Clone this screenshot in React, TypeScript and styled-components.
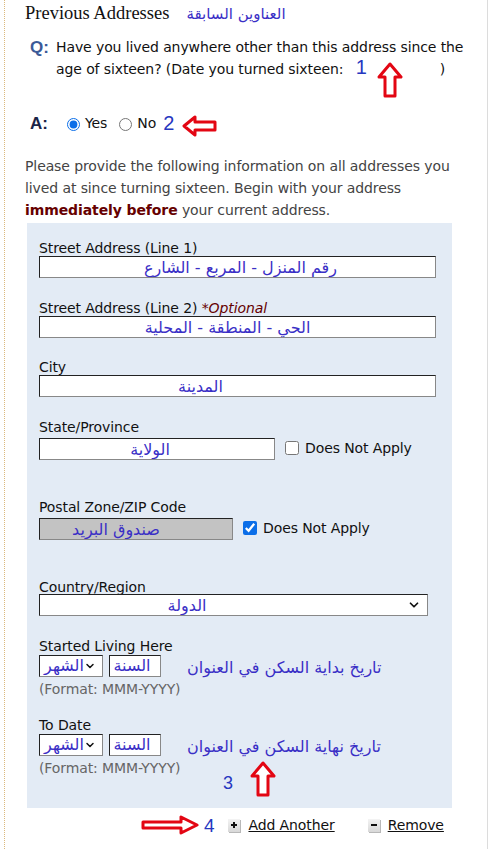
import styled, { createGlobalStyle } from 'styled-components';
import { ChevronDown } from 'lucide-react';

const GlobalStyle = createGlobalStyle`
  html, body {
    margin: 0;
    padding: 0;
    background: #fff;
  }
  body {
    font-family: "DejaVu Sans", Verdana, sans-serif;
    font-size: 14px;
    letter-spacing: -0.1px;
    color: #111;
  }
`;

const ARABIC = `"DejaVu Sans", "Noto Sans", sans-serif`;
const NOTE_BLUE = '#3a2fc6';

const UpArrow = () => (
  <svg width="26" height="36" viewBox="0 0 26 36">
    <path
      d="M13 2 L24 15 L18 15 L18 34 L8 34 L8 15 L2 15 Z"
      fill="#fff"
      stroke="#e30613"
      strokeWidth="3"
      strokeLinejoin="round"
    />
  </svg>
);

const LeftArrow = () => (
  <svg width="35" height="22" viewBox="0 0 35 22">
    <path
      d="M2 11 L13 2 L13 7 L33 7 L33 15 L13 15 L13 20 Z"
      fill="#fff"
      stroke="#e30613"
      strokeWidth="3"
      strokeLinejoin="round"
    />
  </svg>
);

const RightArrow = () => (
  <svg width="58" height="20" viewBox="0 0 58 20">
    <path
      d="M56 10 L40 2 L40 7 L2 7 L2 13 L40 13 L40 18 Z"
      fill="#fff"
      stroke="#e30613"
      strokeWidth="3"
      strokeLinejoin="round"
    />
  </svg>
);

export default function App() {
  return (
    <>
      <GlobalStyle />
      <Frame>
        <TitleRow>
          <Title>Previous Addresses</Title>
          <ArabicNote $size={15}>العناوين السابقة</ArabicNote>
        </TitleRow>

        <QARow $top={14}>
          <Marker $tone="#3b5a98">Q:</Marker>
          <QText>
            Have you lived anywhere other than this address since the
            <br />
            age of sixteen? (Date you turned sixteen:{' '}
            <DateGap>
              <NoteDigit $size={20}>1</NoteDigit>
            </DateGap>
            )
          </QText>
          <Overlay $left={372} $top={62}>
            <UpArrow />
          </Overlay>
        </QARow>

        <AnswerRow>
          <Marker $tone="#1b2447">A:</Marker>
          <RadioLabel>
            <input type="radio" name="lived" defaultChecked />
            Yes
          </RadioLabel>
          <RadioLabel>
            <input type="radio" name="lived" />
            No
          </RadioLabel>
          <DigitSlot>
            <NoteDigit $size={20}>2</NoteDigit>
          </DigitSlot>
          <ArrowSlot>
            <LeftArrow />
          </ArrowSlot>
        </AnswerRow>

        <Intro>
          Please provide the following information on all addresses you
          <br />
          lived at since turning sixteen. Begin with your address
          <br />
          <Strong>immediately before</Strong> your current address.
        </Intro>

        <Panel>
          <Field $top={0}>
            <FieldLabel>Street Address (Line 1)</FieldLabel>
            <TextBox $w={397} $shift={6} defaultValue="رقم المنزل - المربع - الشارع" />
          </Field>

          <Field $top={22}>
            <FieldLabel>
              Street Address (Line 2) <Optional>*Optional</Optional>
            </FieldLabel>
            <TextBox $w={397} $shift={-20} defaultValue="الحي - المنطقة - المحلية" />
          </Field>

          <Field $top={21}>
            <FieldLabel>City</FieldLabel>
            <TextBox $w={397} $shift={-74} defaultValue="المدينة" />
          </Field>

          <Field $top={22}>
            <FieldLabel $gap={3}>State/Province</FieldLabel>
            <InlineRow>
              <TextBox $w={236} $shift={-14} defaultValue="الولاية" />
              <CheckLabel>
                <input type="checkbox" />
                Does Not Apply
              </CheckLabel>
            </InlineRow>
          </Field>

          <Field $top={39}>
            <FieldLabel $gap={3}>Postal Zone/ZIP Code</FieldLabel>
            <InlineRow>
              <TextBox $w={194} $shift={-40} $disabled defaultValue="صندوق البريد" />
              <CheckLabel>
                <input type="checkbox" defaultChecked />
                Does Not Apply
              </CheckLabel>
            </InlineRow>
          </Field>

          <Field $top={39}>
            <FieldLabel $gap={-1}>Country/Region</FieldLabel>
            <SelectWrap $w={389}>
              <Select $shift={-71} defaultValue="country">
                <option value="country">الدولة</option>
              </Select>
              <SelectChevron size={14} strokeWidth={3} />
            </SelectWrap>
          </Field>

          <Field $top={22}>
            <FieldLabel>Started Living Here</FieldLabel>
            <DateRow>
              <SelectWrap $w={64}>
                <Select $shift={0} $small defaultValue="m">
                  <option value="m">الشهر</option>
                </Select>
                <SelectChevron size={12} strokeWidth={3} />
              </SelectWrap>
              <YearBox defaultValue="السنة" />
              <ArabicNote $size={16}>تاريخ بداية السكن في العنوان</ArabicNote>
            </DateRow>
            <FormatHint>(Format: MMM-YYYY)</FormatHint>
          </Field>

          <Field $top={20}>
            <FieldLabel>To Date</FieldLabel>
            <DateRow>
              <SelectWrap $w={64}>
                <Select $shift={0} $small defaultValue="m">
                  <option value="m">الشهر</option>
                </Select>
                <SelectChevron size={12} strokeWidth={3} />
              </SelectWrap>
              <YearBox defaultValue="السنة" />
              <ArabicNote $size={16}>تاريخ نهاية السكن في العنوان</ArabicNote>
            </DateRow>
            <FormatHint>(Format: MMM-YYYY)</FormatHint>
          </Field>

          <Overlay $left={196} $top={551}>
            <NoteDigit $size={18}>3</NoteDigit>
          </Overlay>
          <Overlay $left={223} $top={538}>
            <UpArrow />
          </Overlay>
        </Panel>

        <LinksRow>
          <RightArrow />
          <NoteDigit $size={19}>4</NoteDigit>
          <ActionLink $gap={9}>
            <ActionIcon>
              <svg width="6" height="6" viewBox="0 0 6 6">
                <path d="M3 0 V6 M0 3 H6" stroke="#111" strokeWidth="2" />
              </svg>
            </ActionIcon>
            <LinkText>Add Another</LinkText>
          </ActionLink>
          <ActionLink $gap={28}>
            <ActionIcon>
              <svg width="6" height="6" viewBox="0 0 6 6">
                <path d="M0 3 H6" stroke="#111" strokeWidth="2" />
              </svg>
            </ActionIcon>
            <LinkText>Remove</LinkText>
          </ActionLink>
        </LinksRow>
      </Frame>
    </>
  );
}

const Frame = styled.div`
  position: relative;
  box-sizing: border-box;
  margin-left: 4px;
  width: 484px;
  min-height: 849px;
  padding-left: 20px;
  border-left: 1px dotted #dcb97c;
  border-right: 1px solid #dcdcdc;
`;

const TitleRow = styled.div`
  display: flex;
  align-items: baseline;
  gap: 17px;
  padding-top: 2px;
`;

const Title = styled.h2`
  margin: 0;
  font: 400 18.5px/22px "Liberation Serif", "Times New Roman", serif;
  letter-spacing: 0;
  color: #111;
`;

const ArabicNote = styled.span<{ $size: number }>`
  font-family: ${ARABIC};
  font-size: ${(p) => p.$size}px;
  letter-spacing: 0;
  color: ${NOTE_BLUE};
  white-space: nowrap;
`;

const NoteDigit = styled.span<{ $size: number }>`
  font-family: "Liberation Sans", Arial, sans-serif;
  font-size: ${(p) => p.$size}px;
  line-height: 1;
  color: #2637c0;
`;

const QARow = styled.div<{ $top: number }>`
  display: flex;
  align-items: flex-start;
  margin-top: ${(p) => p.$top}px;
  padding-left: 5px;
`;

const Marker = styled.span<{ $tone: string }>`
  flex: none;
  width: 26px;
  font: 700 17px/19px "Liberation Sans", Arial, sans-serif;
  letter-spacing: 0;
  color: ${(p) => p.$tone};
`;

const QText = styled.p`
  margin: 0;
  line-height: 19px;
  color: #111;
  white-space: nowrap;
`;

const DateGap = styled.span`
  display: inline-block;
  width: 92px;
  padding-left: 8px;
  box-sizing: border-box;
`;

const Overlay = styled.div<{ $left: number; $top: number }>`
  position: absolute;
  left: ${(p) => p.$left}px;
  top: ${(p) => p.$top}px;
  line-height: 0;
`;

const AnswerRow = styled.div`
  display: flex;
  align-items: center;
  height: 22px;
  margin-top: 33px;
  padding-left: 5px;
  gap: 4px;
`;

const DigitSlot = styled.span`
  display: inline-flex;
  margin-left: 2px;
`;

const ArrowSlot = styled.span`
  display: inline-flex;
  margin-left: 4px;
  margin-top: 6px;
`;

const RadioLabel = styled.label`
  display: inline-flex;
  align-items: center;
  margin-right: 1px;

  input {
    margin: 3px 5px 0 7px;
    accent-color: #0b6ee8;
  }
`;

const Intro = styled.p`
  margin: 21px 0 0;
  line-height: 22px;
  color: #444;
  white-space: nowrap;
`;

const Strong = styled.strong`
  color: #660000;
`;

const Panel = styled.div`
  position: relative;
  box-sizing: border-box;
  width: 425px;
  margin: 2px 0 0 2px;
  padding: 17px 0 32px 12px;
  background: #e3ebf5;
`;

const Field = styled.div<{ $top: number }>`
  margin-top: ${(p) => p.$top}px;
`;

const FieldLabel = styled.label<{ $gap?: number }>`
  display: block;
  line-height: 16px;
  margin-bottom: ${(p) => p.$gap ?? 0}px;
  color: #111;
`;

const Optional = styled.i`
  color: #660000;
`;

const TextBox = styled.input<{ $w: number; $shift: number; $disabled?: boolean }>`
  box-sizing: border-box;
  display: block;
  width: ${(p) => p.$w}px;
  height: 22px;
  margin: 0;
  padding: 0 ${(p) => (p.$shift < 0 ? -p.$shift : 0)}px 0 ${(p) => (p.$shift > 0 ? p.$shift : 0)}px;
  border: 1px solid;
  border-color: #222 #888 #888 #222;
  background: ${(p) => (p.$disabled ? '#c3c3c3' : '#fff')};
  font-family: ${ARABIC};
  font-size: 16px;
  letter-spacing: 0;
  color: ${NOTE_BLUE};
  text-align: center;
  outline: none;
`;

const InlineRow = styled.div`
  display: flex;
  align-items: center;
`;

const CheckLabel = styled.label`
  display: inline-flex;
  align-items: center;
  margin-left: 7px;
  margin-top: -2px;

  input {
    margin: 0 6px 0 3px;
    width: 14px;
    height: 14px;
    accent-color: #0b6ee8;
  }
`;

const SelectWrap = styled.div<{ $w: number }>`
  position: relative;
  width: ${(p) => p.$w}px;
  height: 22px;
`;

const Select = styled.select<{ $shift: number; $small?: boolean }>`
  box-sizing: border-box;
  appearance: none;
  width: 100%;
  height: 22px;
  margin: 0;
  padding: 0 ${(p) => (p.$small ? 16 : 22 - p.$shift)}px 0 ${(p) => (p.$small ? 2 : 0)}px;
  border: 1px solid;
  border-color: #222 #888 #888 #222;
  border-radius: 0;
  background: #fff;
  font-family: ${ARABIC};
  font-size: 16px;
  color: ${NOTE_BLUE};
  text-align: center;
  text-align-last: center;
  outline: none;
`;

const SelectChevron = styled(ChevronDown)`
  position: absolute;
  right: 7px;
  top: 50%;
  transform: translateY(-50%);
  color: #111;
  pointer-events: none;
`;

const DateRow = styled.div`
  display: flex;
  align-items: center;
  gap: 6px;

  & > span {
    margin-left: 20px;
    margin-top: 4px;
  }
`;

const YearBox = styled.input`
  box-sizing: border-box;
  width: 52px;
  height: 22px;
  margin: 0;
  padding: 0 6px 0 0;
  border: 1px solid;
  border-color: #222 #888 #888 #222;
  background: #fff;
  font-family: ${ARABIC};
  font-size: 16px;
  color: ${NOTE_BLUE};
  text-align: center;
  outline: none;
`;

const FormatHint = styled.div`
  margin-top: 4px;
  line-height: 16px;
  color: #666;
`;

const LinksRow = styled.div`
  display: flex;
  align-items: center;
  height: 20px;
  margin-top: 7px;
  padding-left: 116px;
  gap: 5px;
`;

const ActionLink = styled.span<{ $gap: number }>`
  display: inline-flex;
  align-items: center;
  gap: 8px;
  margin-left: ${(p) => p.$gap}px;
`;

const ActionIcon = styled.span`
  display: inline-flex;
  align-items: center;
  justify-content: center;
  width: 12px;
  height: 13px;
  background: linear-gradient(#f4f4f4, #d8d8d8);
  box-shadow: 1px 1px 0 #b8b8b8;
`;

const LinkText = styled.span`
  color: #111;
  text-decoration: underline;
`;
